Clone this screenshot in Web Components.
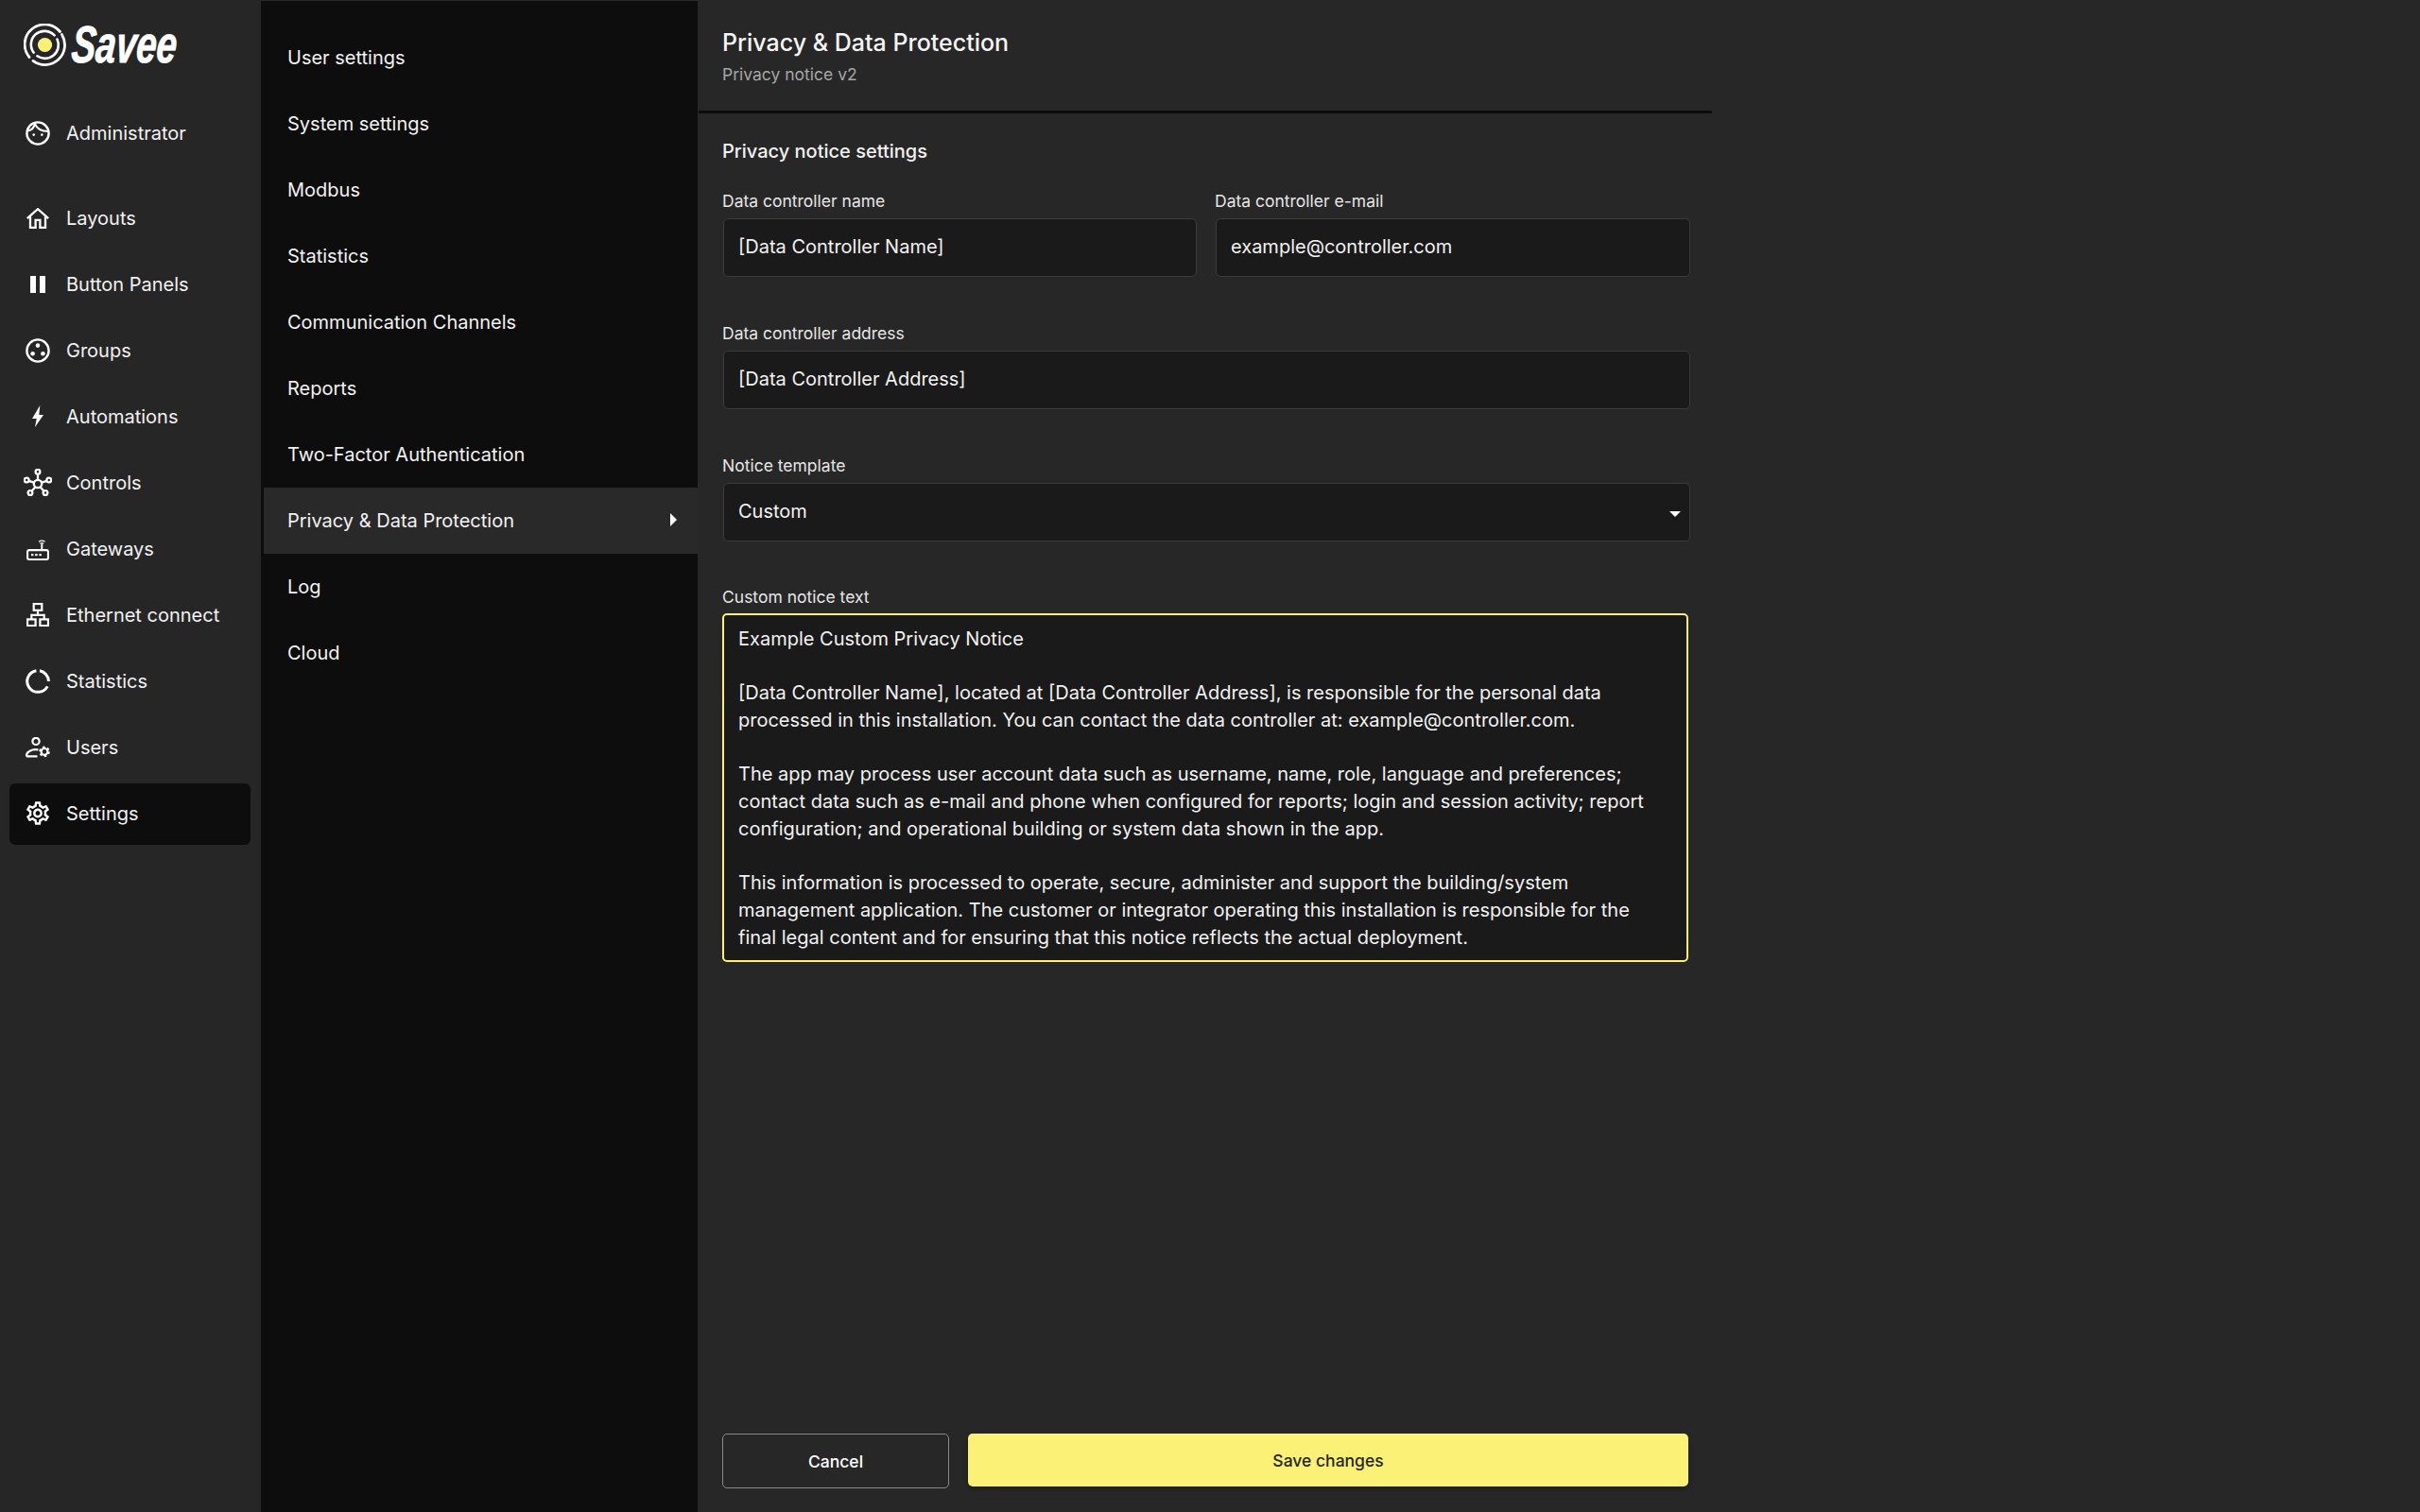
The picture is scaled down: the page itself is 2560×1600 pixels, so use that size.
<!DOCTYPE html>
<html lang="en"><head><meta charset="utf-8"><title>Savee</title>
<style>
html,body{margin:0;height:100%;background:#272727;color:#fff;font-family:Inter,"Noto Sans",sans-serif;overflow:hidden}
</style></head><body>
<savee-app>
  <savee-sidebar slot="sidebar">
    <nav-item icon="admin">Administrator</nav-item>
    <nav-item icon="home" class="first">Layouts</nav-item>
    <nav-item icon="panels">Button Panels</nav-item>
    <nav-item icon="groups">Groups</nav-item>
    <nav-item icon="bolt">Automations</nav-item>
    <nav-item icon="controls">Controls</nav-item>
    <nav-item icon="gateway">Gateways</nav-item>
    <nav-item icon="ethernet">Ethernet connect</nav-item>
    <nav-item icon="stats">Statistics</nav-item>
    <nav-item icon="users">Users</nav-item>
    <nav-item icon="settings" active>Settings</nav-item>
  </savee-sidebar>
  <sub-menu slot="menu">
    <sub-item>User settings</sub-item>
    <sub-item>System settings</sub-item>
    <sub-item>Modbus</sub-item>
    <sub-item>Statistics</sub-item>
    <sub-item>Communication Channels</sub-item>
    <sub-item>Reports</sub-item>
    <sub-item>Two-Factor Authentication</sub-item>
    <sub-item active>Privacy &amp; Data Protection</sub-item>
    <sub-item>Log</sub-item>
    <sub-item>Cloud</sub-item>
  </sub-menu>
  <privacy-page slot="main"></privacy-page>
</savee-app>
<script>
function tpl(html){const t=document.createElement('template');t.innerHTML=html;return t;}
class Base extends HTMLElement{
  constructor(){super();this.attachShadow({mode:'open'}).appendChild(this.constructor.template.content.cloneNode(true));}
}
const ICONS={
admin:`<svg width="26" height="26" viewBox="0 0 26 26" fill="none" stroke="#fff" stroke-width="2.4"><circle cx="13" cy="13" r="11.6"/><path d="M2.8 10.2C6 9.8 9 7.6 10 2.2M10 3.2C12 8.4 17 11 24 11" stroke-linecap="round" stroke-width="2.1"/><circle cx="8.7" cy="14.6" r="1.3" fill="#fff" stroke="none"/><circle cx="17.3" cy="14.6" r="1.3" fill="#fff" stroke="none"/></svg>`,
home:`<svg width="24" height="22" viewBox="0 0 24 22" fill="none" stroke="#fff" stroke-width="2.3"><path d="M.8 11.2 12 1.2l11.2 10"/><path d="M4 9v11.8h5.6v-8h4.8v8H20V9"/></svg>`,
panels:`<svg width="16" height="18" viewBox="0 0 16 18" fill="#fff"><rect x="0" y="0" width="6" height="18"/><rect x="10" y="0" width="6" height="18"/></svg>`,
groups:`<svg width="26" height="26" viewBox="0 0 26 26" fill="none" stroke="#fff" stroke-width="2.4"><circle cx="13" cy="13" r="11.6"/><g fill="#fff" stroke="none"><circle cx="13" cy="7.6" r="2.3"/><circle cx="7.6" cy="16.2" r="2.3"/><circle cx="18.4" cy="16.2" r="2.3"/></g></svg>`,
bolt:`<svg width="12" height="23" viewBox="0 0 12 23" fill="#fff"><path d="M8.3 0 0 14h4.7L3 23 12 10H7.3z"/></svg>`,
controls:`<svg width="30" height="29" viewBox="0 0 30 29" fill="none" stroke="#fff" stroke-width="2.3"><circle cx="15" cy="16" r="4.2"/><circle cx="15" cy="3.2" r="2.4"/><circle cx="3.2" cy="12" r="2.4"/><circle cx="26.8" cy="12" r="2.4"/><circle cx="7" cy="25.6" r="2.4"/><circle cx="23" cy="25.6" r="2.4"/><path d="M15 5.6v6.2M5.5 12.8l5.5 1.9M24.5 12.8 19 14.7M8.5 23.7l4-4.4M21.5 23.7l-4-4.4"/></svg>`,
gateway:`<svg width="24" height="24" viewBox="0 0 24 24" fill="none" stroke="#fff"><rect x="1" y="13.2" width="22" height="9.8" rx="2" stroke-width="2.2"/><path d="M16.3 13V6.5" stroke-width="1.9"/><path d="M13 4.2c2-1.4 4.6-1.4 6.6 0M14.4 6.2c1.2-.8 2.6-.8 3.8 0" stroke-width="1.2"/><g fill="#fff" stroke="none"><rect x="5" y="17" width="2.4" height="2.2"/><rect x="9.2" y="17" width="2.4" height="2.2"/><rect x="13.4" y="17" width="2.4" height="2.2"/></g></svg>`,
ethernet:`<svg width="24" height="25" viewBox="0 0 24 25" fill="none" stroke="#fff" stroke-width="2.2"><rect x="7.7" y="1" width="8.6" height="6.8"/><rect x="1" y="17.4" width="8.6" height="6.8"/><rect x="14.4" y="17.4" width="8.6" height="6.8"/><path d="M12 7.8v5H5.3v4.6M12 12.8h6.7v4.6"/></svg>`,
stats:`<svg width="26" height="26" viewBox="0 0 26 26" fill="none" stroke="#fff" stroke-width="3"><path d="M15 1.8A11.4 11.4 0 0 1 24.4 13"/><path d="M23.2 18.4A11.4 11.4 0 1 1 11.4 1.7"/></svg>`,
users:`<svg width="26" height="22" viewBox="0 0 26 22" fill="none" stroke="#fff" stroke-width="2.2"><circle cx="11" cy="4.4" r="3.6"/><path d="M1 20.4H12.5M1 20.4v-1c0-3.6 5-7 12.4-6"/><circle cx="20" cy="15.4" r="3.4"/><circle cx="20" cy="15.4" r="4.7" stroke-width="2.2" stroke-dasharray="2.46 2.46"/></svg>`,
settings:`<svg width="24" height="25" viewBox="2.2 2 19.6 20" fill="#fff"><path d="M19.43 12.98c.04-.32.07-.64.07-.98 0-.34-.03-.66-.07-.98l2.11-1.65c.19-.15.24-.42.12-.64l-2-3.46c-.09-.16-.26-.25-.44-.25-.06 0-.12.01-.17.03l-2.49 1c-.52-.4-1.08-.73-1.69-.98l-.38-2.65C14.46 2.18 14.25 2 14 2h-4c-.25 0-.46.18-.49.42l-.38 2.65c-.61.25-1.17.59-1.69.98l-2.49-1c-.06-.02-.12-.03-.18-.03-.17 0-.34.09-.43.25l-2 3.46c-.13.22-.07.49.12.64l2.11 1.65c-.04.32-.07.65-.07.98 0 .33.03.66.07.98l-2.11 1.65c-.19.15-.24.42-.12.64l2 3.46c.09.16.26.25.44.25.06 0 .12-.01.17-.03l2.49-1c.52.4 1.08.73 1.69.98l.38 2.65c.03.24.24.42.49.42h4c.25 0 .46-.18.49-.42l.38-2.65c.61-.25 1.17-.59 1.69-.98l2.49 1c.06.02.12.03.18.03.17 0 .34-.09.43-.25l2-3.46c.12-.22.07-.49-.12-.64l-2.11-1.65zm-1.98-1.71c.04.31.05.52.05.73 0 .21-.02.43-.05.73l-.14 1.13.89.7 1.08.84-.7 1.21-1.27-.51-1.04-.42-.9.68c-.43.32-.84.56-1.25.73l-1.06.43-.16 1.13-.2 1.35h-1.4l-.19-1.35-.16-1.13-1.06-.43c-.43-.18-.83-.41-1.23-.71l-.91-.7-1.06.43-1.27.51-.7-1.21 1.08-.84.89-.7-.14-1.13c-.03-.31-.05-.54-.05-.74s.02-.43.05-.73l.14-1.13-.89-.7-1.08-.84.7-1.21 1.27.51 1.04.42.9-.68c.43-.32.84-.56 1.25-.73l1.06-.43.16-1.13.2-1.35h1.39l.19 1.35.16 1.13 1.06.43c.43.18.83.41 1.23.71l.91.7 1.06-.43 1.27-.51.7 1.21-1.07.85-.89.7.14 1.13zM12 8c-2.21 0-4 1.79-4 4s1.79 4 4 4 4-1.79 4-4-1.79-4-4-4zm0 6c-1.1 0-2-.9-2-2s.9-2 2-2 2 .9 2 2-.9 2-2 2z"/></svg>`
};
class SaveeApp extends Base{static template=tpl(`<style>
:host{display:flex;width:100%;height:100vh;background:#272727}
</style><slot name="sidebar"></slot><slot name="menu"></slot><slot name="main"></slot>`);}
class SaveeLogo extends Base{static template=tpl(`<style>
:host{display:flex;align-items:center;height:45px;width:100%;color:#fff}
svg{flex:none;display:block}
span{display:inline-block;margin-left:6px;font:italic 700 55px/45px "Liberation Sans",sans-serif;-webkit-text-stroke:.8px #fff;transform:skewX(-5deg) scaleX(.7);transform-origin:0 50%}
</style><svg width="45" height="45" viewBox="0 0 45 45" fill="none" stroke="#fff"><circle cx="22.5" cy="22.5" r="7.6" fill="#faf176" stroke="none"/>
<path stroke-width="2.8" stroke-linecap="round" d="M38.5 8.5A21 21 0 0 0 6 35.5M10 39.4A21 21 0 0 0 40.4 11.5"/>
<path stroke-width="2.6" stroke-linecap="round" d="M32.6 12.4A14.3 14.3 0 0 0 10.6 30.6M14.4 34.3A14.3 14.3 0 0 0 35.5 16.5"/>
</svg><span>Savee</span>`);}
customElements.define('savee-logo',SaveeLogo);
class SaveeSidebar extends Base{static template=tpl(`<style>
:host{display:flex;flex-direction:column;flex:none;box-sizing:border-box;width:276px;height:100%;padding:25px 11px 0 10px;background:#262626}
savee-logo{margin:0 0 39px 15px}
.list{display:flex;flex-direction:column;gap:5px}
::slotted(.first){margin-top:20px}
</style><savee-logo></savee-logo><div class="list"><slot></slot></div>`);}
class NavItem extends Base{static template=tpl(`<style>
:host{display:flex;align-items:center;box-sizing:border-box;height:65px;padding-bottom:1.5px;border-radius:6px;font:400 20px/24px Inter,sans-serif;color:#f2f2f2}
:host([active]){background:#0d0d0d}
.i{flex:none;width:60px;display:flex;justify-content:center;box-sizing:border-box}
svg{display:block}
</style><div class="i"></div><span><slot></slot></span>`);
  connectedCallback(){this.shadowRoot.querySelector('.i').innerHTML=ICONS[this.getAttribute('icon')]||'';}
}
class SubMenu extends Base{static template=tpl(`<style>
:host{display:flex;flex-direction:column;flex:none;box-sizing:border-box;width:462px;height:calc(100% - 1px);margin-top:1px;padding:25px 0 0 3px;background:#0d0d0d}
</style><slot></slot>`);}
class SubItem extends Base{static template=tpl(`<style>
:host{display:flex;align-items:center;justify-content:space-between;height:70px;padding:0 22px 0 25px;font:400 20px/24px Inter,sans-serif;color:#f2f2f2}
:host([active]){background:#292929}
.a{display:none;width:0;height:0;border-style:solid;border-width:7.5px 0 7.5px 7px;border-color:transparent transparent transparent #fff;margin-top:-2px}
:host([active]) .a{display:block}
</style><span><slot></slot></span><i class="a"></i>`);}
class PageHeader extends Base{static template=tpl(`<style>
:host{display:block;box-sizing:border-box;height:120px;padding:30px 25px 0;border-bottom:3px solid #0d0d0d}
h1{margin:0;font:500 25px/30px Inter,sans-serif;color:#f5f5f5}
p{margin:6px 0 0;font:400 17.5px/26px Inter,sans-serif;color:#a6a6a6}
</style><h1><slot name="title"></slot></h1><p><slot name="sub"></slot></p>`);}
class FormField extends Base{static template=tpl(`<style>
:host{display:block;min-width:0}
label{display:block;height:21px;font:400 17.5px/21px Inter,sans-serif;color:#e6e6e6;margin-left:-1px;margin-bottom:8px}
.box{box-sizing:border-box;position:relative;height:62px;padding:0 15px 1px;display:flex;align-items:center;background:#1a1a1a;border:1.5px solid #3b3b3b;border-radius:5px;font:400 20px/28.75px Inter,sans-serif;color:#f2f2f2}
.tri{display:none;position:absolute;right:9.5px;top:29px;width:0;height:0;border-style:solid;border-width:6px 6px 0;border-color:#fff transparent transparent}
:host([select]) .tri{display:block}
</style><label></label><div class="box"><slot></slot><i class="tri"></i></div>`);
  connectedCallback(){this.shadowRoot.querySelector('label').textContent=this.getAttribute('label');}
}
class NoticeArea extends Base{static template=tpl(`<style>
:host{display:block}
label{display:block;height:21px;font:400 17.5px/21px Inter,sans-serif;color:#e6e6e6;margin-bottom:7px}
.t{box-sizing:border-box;height:369px;padding:10.5px 15px 0;background:#1a1a1a;border:2px solid #faf176;border-radius:5px;font:400 20px/28.75px Inter,sans-serif;color:#f2f2f2;white-space:pre-line;overflow:hidden}
</style><label></label><div class="t"><slot></slot></div>`);
  connectedCallback(){this.shadowRoot.querySelector('label').textContent=this.getAttribute('label');}
}
class ActionButton extends Base{static template=tpl(`<style>
:host{display:flex;align-items:center;justify-content:center;box-sizing:border-box;height:58px;padding-top:1px;border-radius:5px;font:500 17.5px/22px Inter,sans-serif;color:#fff;border:1.5px solid #8a8a8a}
:host([primary]){height:56px;padding-top:1px;background:#faf176;border:0;color:#262626;box-shadow:0 2px 4px rgba(0,0,0,.35)}
</style><slot></slot>`);}
class PrivacyPage extends Base{static template=tpl(`<style>
:host{display:flex;flex-direction:column;flex:none;box-sizing:border-box;width:1072px;height:100%;margin-left:1px}
.body{flex:1;display:flex;flex-direction:column;padding:0 25px 25px;min-height:0}
h2{margin:28px 0 0;height:24px;font:500 20px/24px Inter,sans-serif;color:#f2f2f2}
.fields{margin:30px -2px 0 1px;display:flex;flex-direction:column;gap:49px}
.row{display:grid;grid-template-columns:501px 1fr;gap:20px}
notice-area{margin-top:48px}
.actions{margin-top:auto;display:grid;grid-template-columns:240px 1fr;gap:20px;align-items:start}
</style>
<page-header><span slot="title">Privacy &amp; Data Protection</span><span slot="sub">Privacy notice v2</span></page-header>
<div class="body">
<h2>Privacy notice settings</h2>
<div class="fields">
  <div class="row">
    <form-field label="Data controller name">[Data Controller Name]</form-field>
    <form-field label="Data controller e-mail">example@controller.com</form-field>
  </div>
  <form-field label="Data controller address">[Data Controller Address]</form-field>
  <form-field label="Notice template" select>Custom</form-field>
</div>
<notice-area label="Custom notice text">Example Custom Privacy Notice

[Data Controller Name], located at [Data Controller Address], is responsible for the personal data processed in this installation. You can contact the data controller at: example@controller.com.

The app may process user account data such as username, name, role, language and preferences; contact data such as e-mail and phone when configured for reports; login and session activity; report configuration; and operational building or system data shown in the app.

This information is processed to operate, secure, administer and support the building/system management application. The customer or integrator operating this installation is responsible for the final legal content and for ensuring that this notice reflects the actual deployment.</notice-area>
<div class="actions"><action-button>Cancel</action-button><action-button primary>Save changes</action-button></div>
</div>`);}
customElements.define('savee-sidebar',SaveeSidebar);
customElements.define('nav-item',NavItem);
customElements.define('sub-menu',SubMenu);
customElements.define('sub-item',SubItem);
customElements.define('page-header',PageHeader);
customElements.define('form-field',FormField);
customElements.define('notice-area',NoticeArea);
customElements.define('action-button',ActionButton);
customElements.define('privacy-page',PrivacyPage);
customElements.define('savee-app',SaveeApp);
</script>
</body></html>
